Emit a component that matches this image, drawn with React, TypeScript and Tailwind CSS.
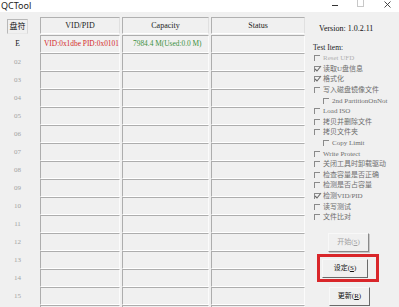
import React from "react";

const serif = "font-['Liberation_Serif','Noto_Sans_CJK_SC',serif]";

const items: { t: string; c?: boolean; dim?: boolean; sub?: boolean }[] = [
  { t: "Reset UFD", dim: true },
  { t: "读取U盘信息", c: true },
  { t: "格式化", c: true },
  { t: "写入磁盘镜像文件" },
  { t: "2nd PartitionOnNot", sub: true },
  { t: "Load ISO" },
  { t: "拷贝并删除文件" },
  { t: "拷贝文件夹" },
  { t: "Copy Limit", sub: true },
  { t: "Write Protect" },
  { t: "关闭工具时卸载驱动" },
  { t: "检查容量是否正确" },
  { t: "检测是否占容量" },
  { t: "检测VID/PID", c: true },
  { t: "读写测试" },
  { t: "文件比对" },
];

const rows = ["E", "02", "03", "04", "05", "06", "07", "08", "09", "10", "11", "12", "13", "14", "15", ""];

function Box({ w, children, cls = "" }: { w: string; children?: React.ReactNode; cls?: string }) {
  return (
    <div
      className={`${w} h-[18px] border-t border-l border-t-[#adadad] border-l-[#adadad] border-b border-r border-b-white border-r-[#fbfbfb] bg-[#f0f0f0] flex items-center overflow-hidden whitespace-nowrap ${cls}`}
    >
      {children}
    </div>
  );
}

function Check({ on }: { on?: boolean }) {
  return (
    <span className="relative w-[6px] h-[6px] border-t border-l border-[#8a8a8a] shrink-0">
      {on && (
        <svg className="absolute left-[-1px] top-[-2px]" width="8" height="8" viewBox="0 0 8 8">
          <path d="M1 4 L3 6 L7 1" fill="none" stroke="#6a6a6a" strokeWidth="1.1" />
        </svg>
      )}
    </span>
  );
}

export default function App() {
  return (
    <div className={`w-[399px] h-[307px] overflow-hidden bg-[#f0f0f0] flex flex-col ${serif}`}>
      {/* title bar */}
      <div className="relative h-[12px] bg-white shrink-0 flex items-start">
        <span className="pl-[1px] pt-[1px] text-[9px] leading-[10px] text-[#222] font-['Noto_Sans','Liberation_Sans',sans-serif]">
          QCTool
        </span>
        <span className="absolute left-[332px] top-[5px] w-[6px] h-px bg-[#333]" />
        <span className="absolute left-[357px] top-[-1px] w-[7px] h-[8px] border border-[#c8c8c8]" />
        <svg className="absolute left-[384px] top-[1px]" width="7" height="7" viewBox="0 0 7 7">
          <path d="M0.5 0.5 L6.5 6.5 M6.5 0.5 L0.5 6.5" stroke="#333" strokeWidth="0.9" />
        </svg>
      </div>

      <div className="flex flex-1 min-h-0">
        {/* table */}
        <div className="w-[305px] shrink-0 pl-[7px] pt-[5px] flex flex-col">
          {/* header */}
          <div className="flex h-[18px] shrink-0">
            <div className="w-[21px] h-[15px] mt-[2px] border border-[#b8b8b8] border-b-[#e8e8e8] border-r-[#d8d8d8] flex items-center justify-center text-[8px] text-[#111]">
              盘符
            </div>
            <div className="ml-[12px] w-[80px] h-[17px] border-t border-l border-[#b0b0b0] border-b border-r border-b-white border-r-[#e0e0e0] flex items-center justify-center text-[8px] text-[#222]">
              VID/PID
            </div>
            <div className="ml-[2px] w-[87px] h-[17px] border-t border-l border-[#b0b0b0] border-b border-r border-b-white border-r-[#e0e0e0] flex items-center justify-center text-[8px] text-[#222]">
              Capacity
            </div>
            <div className="ml-[2px] w-[94px] h-[17px] border-t border-l border-[#b0b0b0] border-b border-r border-b-white border-r-[#e0e0e0] flex items-center justify-center text-[8px] text-[#222]">
              Status
            </div>
          </div>
          {rows.map((r, i) => (
            <div key={i} className="flex h-[18px] shrink-0">
              <div
                className={`w-[21px] flex items-center justify-center ${
                  i === 0 ? "text-[#111] text-[7.5px]" : "text-[#a3a3a3] text-[7px]"
                }`}
              >
                {r}
              </div>
              <Box w="ml-[12px] w-[80px]" cls="pl-[3px]">
                {i === 0 && <span className="text-[7.4px] text-[#d42a2a]">VID:0x1dbe PID:0x0101</span>}
              </Box>
              <Box w="ml-[2px] w-[87px]" cls="pl-[10px]">
                {i === 0 && <span className="text-[7.4px] text-[#3d9140]">7984.4 M(Used:0.0 M)</span>}
              </Box>
              <Box w="ml-[2px] w-[94px]" />
            </div>
          ))}
        </div>

        {/* right panel */}
        <div className="flex-1 flex flex-col pl-[8px]">
          <div className="mt-[12px] ml-[6px] h-[10px] leading-[10px] text-[8px] text-[#111] whitespace-nowrap">
            Version: 1.0.2.11
          </div>
          <div className="mt-[9px] h-[10px] leading-[10px] text-[7.5px] text-[#222]">Test Item:</div>
          <div className="flex flex-col">
            {items.map((it) => (
              <div
                key={it.t}
                className={`h-[10.6px] flex items-center whitespace-nowrap ${it.sub ? "pl-[10px]" : "pl-[1px]"}`}
              >
                <Check on={it.c} />
                <span
                  className={`ml-[3px] text-[7px] leading-[10px] ${
                    it.dim ? "text-[#b0b0b0]" : "text-[#6e6e6e]"
                  }`}
                >
                  {it.t}
                </span>
              </div>
            ))}
          </div>

          <div className="mt-[10px] ml-[15px] w-[41px] h-[19px] shrink-0 border border-t-[#f8f8f8] border-l-[#f8f8f8] border-r-[#8a8a8a] border-b-[#8a8a8a] shadow-[1px_1px_0_#c8c8c8] flex items-center justify-center text-[7px] text-[#a0a0a0]">
            开始(<span className="underline">S</span>)
          </div>
          <div className="mt-[2px] ml-[4px] w-[62px] h-[28px] shrink-0 border-[3px] border-[#d9262a] flex items-start pt-[2px] pl-[2px]">
            <div className="w-[46px] h-[19px] border border-t-[#f8f8f8] border-l-[#f8f8f8] border-r-[#6a6a6a] border-b-[#6a6a6a] flex items-center justify-center text-[7px] text-[#111]">
              设定(<span className="underline">S</span>)
            </div>
          </div>
          <div className="mt-[5px] ml-[16px] w-[41px] h-[19px] shrink-0 border border-t-[#f8f8f8] border-l-[#f8f8f8] border-r-[#6a6a6a] border-b-[#6a6a6a] flex items-center justify-center text-[7px] text-[#111]">
            更新(<span className="underline">R</span>)
          </div>
        </div>
      </div>
    </div>
  );
}
